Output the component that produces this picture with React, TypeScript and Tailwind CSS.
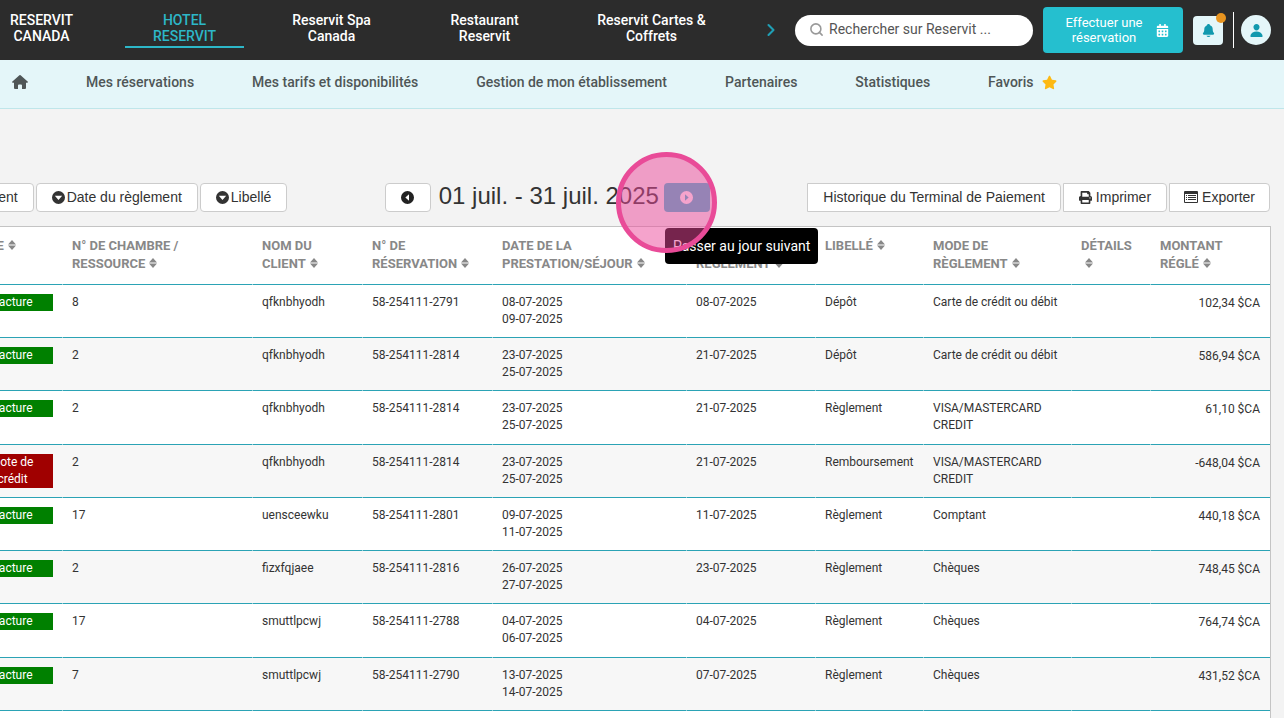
import type { ReactNode } from "react";
import { FaCalendarAlt, FaPrint, FaStar } from "react-icons/fa";
import { IoNotifications, IoPerson } from "react-icons/io5";
import { ChevronRight, Search } from "lucide-react";

interface Payment {
  kind: "facture" | "credit";
  room: string;
  client: string;
  booking: string;
  from: string;
  to: string;
  paidOn: string;
  label: string;
  mode: string;
  amount: string;
}

const hotels = [
  { name: "RESERVIT CANADA", width: "w-[119px]" },
  { name: "HOTEL RESERVIT", width: "w-[119px]", active: true },
  { name: "Reservit Spa Canada", width: "w-[127px]" },
  { name: "Restaurant Reservit", width: "w-[131px]" },
  { name: "Reservit Cartes & Coffrets", width: "w-[155px]" },
];

const menu = [
  "Mes réservations",
  "Mes tarifs et disponibilités",
  "Gestion de mon établissement",
  "Partenaires",
  "Statistiques",
];

const columns = [
  { title: "TYPE", width: "w-[100px]" },
  { title: "N° DE CHAMBRE / RESSOURCE", width: "" },
  { title: "NOM DU CLIENT", width: "w-[110px]" },
  { title: "N° DE RÉSERVATION", width: "w-[130px]" },
  { title: "DATE DE LA PRESTATION/SÉJOUR", width: "w-[194px]" },
  { title: "DATE DE RÈGLEMENT", width: "w-[129px]" },
  { title: "LIBELLÉ", width: "w-[108px]" },
  { title: "MODE DE RÈGLEMENT", width: "w-[148px]" },
  { title: "DÉTAILS", width: "w-[79px]" },
  { title: "MONTANT RÉGLÉ", width: "w-[120px]" },
];

const payments: Payment[] = [
  { kind: "facture", room: "8", client: "qfknbhyodh", booking: "58-254111-2791", from: "08-07-2025", to: "09-07-2025", paidOn: "08-07-2025", label: "Dépôt", mode: "Carte de crédit ou débit", amount: "102,34 $CA" },
  { kind: "facture", room: "2", client: "qfknbhyodh", booking: "58-254111-2814", from: "23-07-2025", to: "25-07-2025", paidOn: "21-07-2025", label: "Dépôt", mode: "Carte de crédit ou débit", amount: "586,94 $CA" },
  { kind: "facture", room: "2", client: "qfknbhyodh", booking: "58-254111-2814", from: "23-07-2025", to: "25-07-2025", paidOn: "21-07-2025", label: "Règlement", mode: "VISA/MASTERCARD CREDIT", amount: "61,10 $CA" },
  { kind: "credit", room: "2", client: "qfknbhyodh", booking: "58-254111-2814", from: "23-07-2025", to: "25-07-2025", paidOn: "21-07-2025", label: "Remboursement", mode: "VISA/MASTERCARD CREDIT", amount: "-648,04 $CA" },
  { kind: "facture", room: "17", client: "uensceewku", booking: "58-254111-2801", from: "09-07-2025", to: "11-07-2025", paidOn: "11-07-2025", label: "Règlement", mode: "Comptant", amount: "440,18 $CA" },
  { kind: "facture", room: "2", client: "fizxfqjaee", booking: "58-254111-2816", from: "26-07-2025", to: "27-07-2025", paidOn: "23-07-2025", label: "Règlement", mode: "Chèques", amount: "748,45 $CA" },
  { kind: "facture", room: "17", client: "smuttlpcwj", booking: "58-254111-2788", from: "04-07-2025", to: "06-07-2025", paidOn: "04-07-2025", label: "Règlement", mode: "Chèques", amount: "764,74 $CA" },
  { kind: "facture", room: "7", client: "smuttlpcwj", booking: "58-254111-2790", from: "13-07-2025", to: "14-07-2025", paidOn: "07-07-2025", label: "Règlement", mode: "Chèques", amount: "431,52 $CA" },
];

const circlePaths = {
  down: "M6 0a6 6 0 1 0 0 12A6 6 0 0 0 6 0ZM2.6 4.4h6.8L6 8.4Z",
  left: "M6 0a6 6 0 1 0 0 12A6 6 0 0 0 6 0ZM7.4 3v6L4 6Z",
  right: "M6 0a6 6 0 1 0 0 12A6 6 0 0 0 6 0ZM4.6 3v6L8 6Z",
};

function CircleIcon({ dir }: { dir: keyof typeof circlePaths }) {
  return (
    <svg viewBox="0 0 12 12" className="w-[13px] h-[13px] shrink-0" fill="currentColor" fillRule="evenodd" aria-hidden="true">
      <path d={circlePaths[dir]} />
    </svg>
  );
}

function SortIcon() {
  return (
    <svg viewBox="0 0 8 10" className="inline-block w-2 h-2.5 ml-1 align-baseline" fill="currentColor" aria-hidden="true">
      <path d="M4 0 8 4.400H0ZM0 5.600h8L4 10Z" />
    </svg>
  );
}

function HomeIcon() {
  return (
    <svg viewBox="0 0 16 14" className="w-4 h-3.5" fill="currentColor" aria-hidden="true">
      <path d="M7.4.3a1 1 0 0 1 1.2 0l7 6.1c.7.6.3 1.4-.4 1.4H14V13a1 1 0 0 1-1 1h-3v-3.500a1 1 0 0 0-1-1H7a1 1 0 0 0-1 1V14H3a1 1 0 0 1-1-1V7.800H.800C.100 7.800-.300 7 .400 6.400Z" />
    </svg>
  );
}

function ListIcon() {
  return (
    <svg viewBox="0 0 14 12" className="w-3.5 h-3" fill="currentColor" aria-hidden="true">
      <path fillRule="evenodd" d="M1 0h12a1 1 0 0 1 1 1v10a1 1 0 0 1-1 1H1a1 1 0 0 1-1-1V1a1 1 0 0 1 1-1ZM1 3v8h12V3Z" />
      <path d="M2 4h1v1H2ZM4 4h8v1H4ZM2 6h1v1H2ZM4 6h8v1H4ZM2 8h1v1H2ZM4 8h8v1H4Z" />
    </svg>
  );
}

function ToolButton({ children, className = "" }: { children: ReactNode; className?: string }) {
  return (
    <button
      type="button"
      className={`h-[29px] pb-px flex items-center shrink-0 whitespace-nowrap border border-[#ccc] bg-white text-sm text-[#333] ${className}`}
    >
      {children}
    </button>
  );
}

function TopBar() {
  return (
    <header className="h-[60px] flex items-center bg-[#2c2c2c]">
      <nav className="flex flex-1 items-center gap-6 -ml-[18px]">
        {hotels.map((h) => (
          <a
            key={h.name}
            href="#"
            className={`${h.width} px-5 pb-0.5 shrink-0 text-center text-sm leading-4 font-medium border-b-2
              ${h.active ? "text-[#2db7c8] border-[#2db7c8]" : "text-white border-transparent"}`}
          >
            {h.name}
          </a>
        ))}
      </nav>
      <div className="flex items-center shrink-0 pr-[13px]">
        <button type="button" aria-label="Établissements suivants" className="mr-3.5 text-[#1f9fb5]">
          <ChevronRight size={20} strokeWidth={2.5} />
        </button>
        <div className="w-[238px] h-[31px] px-3.5 pb-0.5 flex items-center gap-[5px] rounded-full bg-white">
          <Search size={15} strokeWidth={2.5} className="shrink-0 text-[#999]" />
          <input
            type="text"
            aria-label="Rechercher sur Reservit"
            placeholder="Rechercher sur Reservit ..."
            className="w-full text-sm text-[#555] placeholder:text-[#555] outline-none"
          />
        </div>
        <button type="button" className="w-[140px] h-[46px] ml-2.5 pl-[21px] pr-3.5 flex items-center justify-between rounded bg-[#25bfcf] text-[13px] leading-[15px] text-white">
          <span className="w-20">Effectuer une réservation</span>
          <FaCalendarAlt size={13} />
        </button>
        <button type="button" aria-label="Notifications" className="relative w-[30px] h-[29px] ml-2.5 flex items-center justify-center rounded bg-[#e4f6f9] text-[#1299ae]">
          <IoNotifications size={15} />
          <span className="absolute -top-[3px] -right-[3px] w-2.5 h-2.5 rounded-full bg-[#e8941f]" />
        </button>
        <div className="w-px h-9 ml-2.5 mr-[7px] bg-white" />
        <button type="button" aria-label="Mon compte" className="w-[30px] h-[30px] flex items-center justify-center rounded-full bg-[#e4f6f9] text-[#1299ae]">
          <IoPerson size={15} />
        </button>
      </div>
    </header>
  );
}

function MenuBar() {
  return (
    <nav className="h-[49px] pl-3 pb-1 flex items-center gap-[58px] border-b border-[#bfe6ea] bg-[#e4f6f9] text-sm font-medium text-[#4f5657]">
      <a href="#" aria-label="Accueil"><HomeIcon /></a>
      {menu.map((item) => (
        <a key={item} href="#" className="whitespace-nowrap">{item}</a>
      ))}
      <a href="#" className="flex items-center gap-2">
        Favoris
        <FaStar size={15} className="text-[#fdb913]" />
      </a>
    </nav>
  );
}

function Toolbar() {
  return (
    <div className="-ml-[134px] mr-[14px] flex items-center justify-between font-['Liberation_Sans',Arial,sans-serif]">
      <div className="flex gap-0.5">
        <ToolButton className="gap-0.5 px-[15px] rounded"><CircleIcon dir="down" />Mode de règlement</ToolButton>
        <ToolButton className="gap-0.5 px-[15px] rounded"><CircleIcon dir="down" />Date du règlement</ToolButton>
        <ToolButton className="gap-0.5 px-[15px] rounded"><CircleIcon dir="down" />Libellé</ToolButton>
      </div>

      <div className="flex items-center">
        <button type="button" aria-label="Jour précédent" className="w-[46px] h-[29px] flex items-center justify-center rounded border border-[#ccc] bg-white text-[#222]">
          <CircleIcon dir="left" />
        </button>
        <h1 className="ml-2 mr-[5px] pb-1 text-2xl leading-6 text-[#333] whitespace-nowrap">01 juil. - 31 juil. 2025</h1>
        <div className="relative">
          <button type="button" aria-describedby="next-tip" aria-label="Jour suivant" className="w-[46px] h-[29px] flex items-center justify-center rounded bg-[#40bed1] text-white">
            <CircleIcon dir="right" />
          </button>
          {/* tooltip, with the click marker above it */}
          <div id="next-tip" role="tooltip" className="absolute left-px top-[45px] z-10 h-9 px-2 flex items-center rounded bg-black font-[Roboto,sans-serif] text-sm text-white whitespace-nowrap">
            Passer au jour suivant
          </div>
          <div className="absolute -left-12 -top-[31px] z-20 w-[101px] h-[101px] rounded-full border-[5px] border-[#e94b98] bg-[#ec4899]/50 pointer-events-none" />
        </div>
      </div>

      <div className="flex gap-0.5">
        <ToolButton className="px-[15px] rounded-r">Historique du Terminal de Paiement</ToolButton>
        <ToolButton className="gap-1 px-[15px] rounded-r"><FaPrint size={13} />Imprimer</ToolButton>
        <ToolButton className="gap-1 px-3.5 rounded-r"><ListIcon />Exporter</ToolButton>
      </div>
    </div>
  );
}

function PaymentRow({ row }: { row: Payment }) {
  const cell = "px-[9px] pt-[9px] align-top border-b border-l border-l-transparent border-b-[#2ba3b5]";
  return (
    <tr className="h-[53px] nth-[4n+3]:h-[54px] even:bg-[#f7f7f7]">
      <td className={cell}>
        <span className={`block px-4 text-center text-white ${row.kind === "credit" ? "bg-[#a00000]" : "bg-[#008000]"}`}>
          {row.kind === "credit" ? "Note de crédit" : "Facture"}
        </span>
      </td>
      <td className={cell}>{row.room}</td>
      <td className={cell}>{row.client}</td>
      <td className={cell}>{row.booking}</td>
      <td className={cell}>{row.from}<br />{row.to}</td>
      <td className={cell}>{row.paidOn}</td>
      <td className={cell}>{row.label}</td>
      <td className={cell}>{row.mode}</td>
      <td className={cell} />
      <td className="px-2.5 pt-2.5 align-top text-right border-b border-l border-l-transparent border-b-[#2ba3b5]">{row.amount}</td>
    </tr>
  );
}

export default function App() {
  return (
    <div className="min-h-screen overflow-hidden bg-[#f3f3f3] font-[Roboto,sans-serif]">
      <TopBar />
      <MenuBar />
      <main className="pt-[74px]">
        <Toolbar />
        <div className="mt-3.5 -ml-[38px] mr-[13px] border-t border-r border-[#c4c4c4] bg-white">
          <table className="w-full table-fixed border-separate border-spacing-0 text-xs leading-[17px] text-[#333]">
            <thead>
              <tr className="h-[58px] text-[13px] leading-[18px] text-[#888]">
                {columns.map((c) => (
                  <th
                    key={c.title}
                    scope="col"
                    className={`${c.width} px-[9px] pt-2.5 align-top text-left font-bold border-b border-l border-l-transparent border-b-[#2ba3b5]`}
                  >
                    {c.title}<SortIcon />
                  </th>
                ))}
              </tr>
            </thead>
            <tbody>
              {payments.map((p, i) => (
                <PaymentRow key={i} row={p} />
              ))}
            </tbody>
          </table>
          <div className="h-2" />
        </div>
      </main>
    </div>
  );
}
